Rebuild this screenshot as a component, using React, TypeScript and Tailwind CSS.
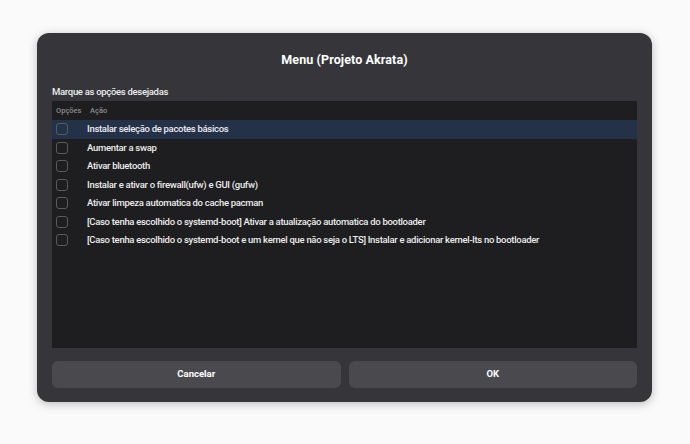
const OPTIONS = [
  'Instalar seleção de pacotes básicos',
  'Aumentar a swap',
  'Ativar bluetooth',
  'Instalar e ativar o firewall(ufw) e GUI (gufw)',
  'Ativar limpeza automatica do cache pacman',
  '[Caso tenha escolhido o systemd-boot] Ativar a atualização automatica do bootloader',
  '[Caso tenha escolhido o systemd-boot e um kernel que não seja o LTS] Instalar e adicionar kernel-lts no bootloader',
]

export default function App() {
  return (
    <div
      className="w-[690px] h-[444px] bg-[#fafafa] pt-[33px] pl-[37px]"
      style={{ fontFamily: 'Roboto, "Noto Sans", sans-serif' }}
    >
      <div className="w-[615px] h-[369px] bg-[#36363a] rounded-[12px] shadow-[0_2px_10px_rgba(0,0,0,0.25)] flex flex-col px-[15px]">
        {/* Title */}
        <div className="h-[54px] flex items-center justify-center pt-[1px]">
          <h1 className="text-[12.5px] font-bold text-white tracking-[0.1px]">Menu (Projeto Akrata)</h1>
        </div>

        <div className="text-[9.5px] font-medium text-[#ececec] leading-none h-[12px] mb-[2px] tracking-[-0.3px]">Marque as opções desejadas</div>

        {/* List */}
        <div className="h-[247px] bg-[#1e1e20] flex flex-col">
          <div className="h-[19px] flex items-center text-[7.5px] font-medium text-[#8c8c90] pl-[4px]">
            <span className="w-[34px]">Opções</span>
            <span>Ação</span>
          </div>
          {OPTIONS.map((label, i) => (
            <div
              key={i}
              className={`h-[18.5px] flex items-center text-[9.5px] font-medium text-[#ececec] tracking-[-0.3px] ${i === 0 ? 'bg-[#243249]' : ''}`}
            >
              <span className="ml-[4px] w-[12px] h-[12px] rounded-[3px] border border-[#5a5a5e] shrink-0" />
              <span className="ml-[19px] whitespace-nowrap">{label}</span>
            </div>
          ))}
        </div>

        {/* Buttons */}
        <div className="flex gap-[8px] mt-[13px]">
          <button className="flex-1 h-[27px] rounded-[6px] bg-[#4a4a4e] text-white text-[9.5px] font-bold">
            Cancelar
          </button>
          <button className="flex-1 h-[27px] rounded-[6px] bg-[#4a4a4e] text-white text-[9.5px] font-bold">
            OK
          </button>
        </div>
      </div>
    </div>
  )
}
